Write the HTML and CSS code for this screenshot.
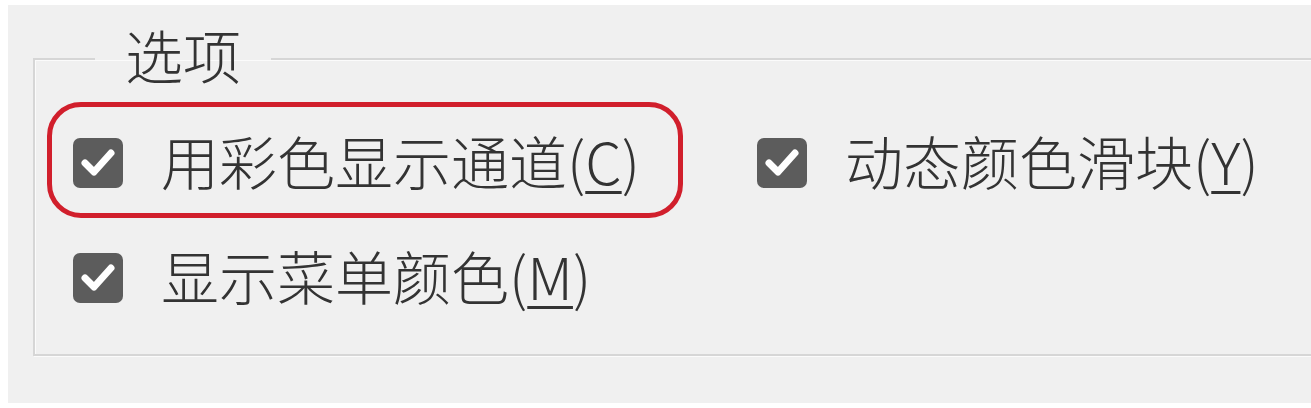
FILE: index.html
```html
<!DOCTYPE html>
<html lang="zh-CN">
<head>
  <meta charset="UTF-8">
  <title>选项</title>
  <link rel="stylesheet" href="styles.css">
</head>
<body>
  <div class="panel">
    <fieldset class="group">
      <legend>选项</legend>
      <div class="row">
        <label class="option highlight">
          <span class="check"><svg viewBox="0 0 50 50"><path d="M12 25 L21 34 L38 15"/></svg></span>
          <span class="text">用彩色显示通道(<u>C</u>)</span>
        </label>
        <label class="option second">
          <span class="check"><svg viewBox="0 0 50 50"><path d="M12 25 L21 34 L38 15"/></svg></span>
          <span class="text">动态颜色滑块(<u>Y</u>)</span>
        </label>
      </div>
      <div class="row row-2">
        <label class="option plain">
          <span class="check"><svg viewBox="0 0 50 50"><path d="M12 25 L21 34 L38 15"/></svg></span>
          <span class="text">显示菜单颜色(<u>M</u>)</span>
        </label>
      </div>
    </fieldset>
  </div>
</body>
</html>
```

FILE: styles.css
```css
html, body {
  margin: 0;
  padding: 0;
  background: #fff;
  overflow: hidden;
}
body {
  font-family: "Noto Sans CJK SC", "Noto Sans", sans-serif;
  font-weight: 300;
  color: #333;
}
.panel {
  margin: 5px 0 0 8px;
  height: 398px;
  background: #f0f0f0;
  padding: 22px 0 0 25px;
  box-sizing: border-box;
  overflow: hidden;
}
.group {
  margin: 0 -20px 0 0;
  padding: 0 0 49px 0;
  border: 2px solid #d6d6d6;
  box-shadow: 1px 1px 0 #fbfbfb, inset 1px 1px 0 #fbfbfb;
}
.group legend {
  margin-left: 60px;
  padding: 0 30px 10px;
  font-size: 58px;
  line-height: 54px;
  height: 64px;
  box-sizing: border-box;
}
.row {
  display: flex;
  align-items: center;
  margin-top: 11px;
  padding-left: 12px;
}
.row-2 {
  margin-top: 27px;
}
.option {
  display: flex;
  align-items: center;
  gap: 38px;
  font-size: 58px;
}
.text {
  line-height: 60px;
  white-space: nowrap;
}
.text u {
  text-decoration-thickness: 3px;
  text-underline-offset: 6px;
}
.highlight {
  width: 636px;
  height: 116px;
  box-sizing: border-box;
  border: 5px solid #d11f2c;
  border-radius: 34px;
  padding-left: 21px;
}
.second {
  margin-left: 74px;
}
.plain {
  height: 60px;
  padding-left: 26px;
}
.check {
  width: 50px;
  height: 50px;
  border-radius: 7px;
  background: #5c5c5c;
  display: flex;
  flex-shrink: 0;
  margin-top: 6px;
}
.check svg {
  width: 50px;
  height: 50px;
}
.check path {
  fill: none;
  stroke: #fff;
  stroke-width: 7;
  stroke-linecap: round;
  stroke-linejoin: round;
}
```
